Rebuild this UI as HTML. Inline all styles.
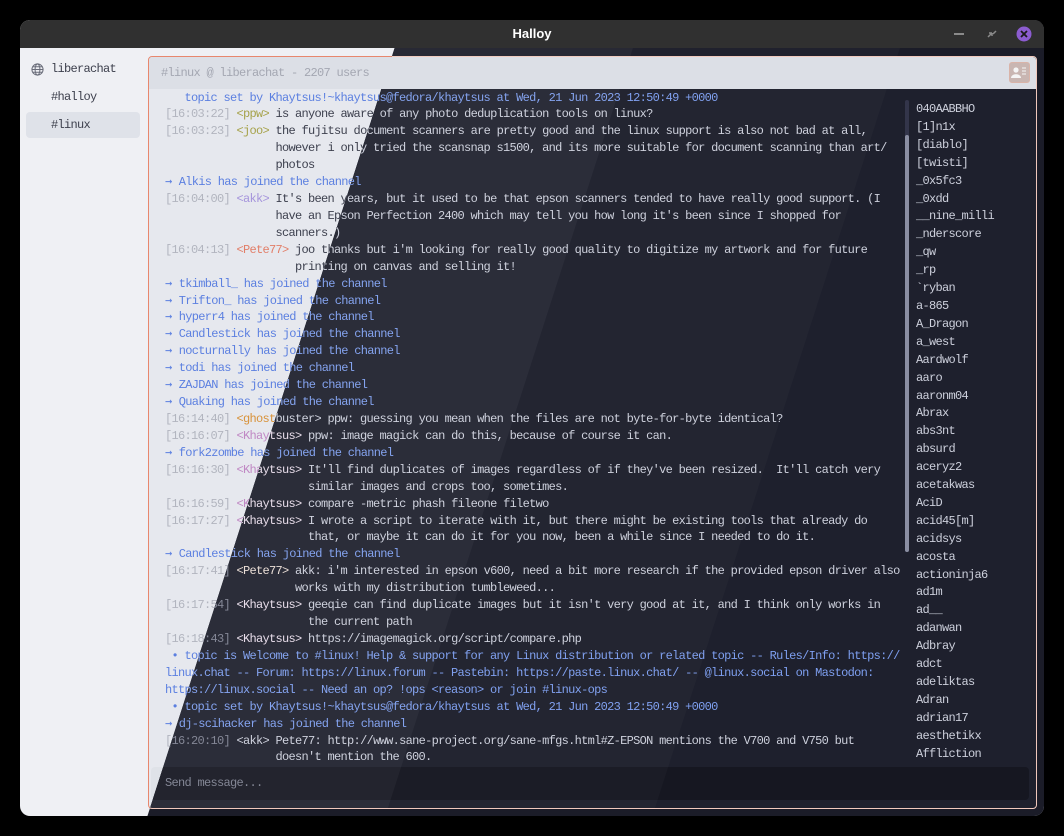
<!DOCTYPE html>
<html><head><meta charset="utf-8"><style>
*{margin:0;padding:0;box-sizing:border-box}
body{width:1064px;height:836px;background:#000;position:relative;overflow:hidden;font-family:"Liberation Sans",sans-serif}
.layer{position:absolute;left:0;top:0;width:1064px;height:836px}
.win{position:absolute;left:20px;top:20px;width:1024px;height:796px;border-radius:10px;overflow:hidden;background:var(--bg)}
.title{position:absolute;left:0;top:0;width:1024px;height:28px;background:#303030;color:#fff;font-weight:bold;font-size:13px;text-align:center;line-height:28px;z-index:5}
.mono{font-family:"Liberation Mono",monospace;font-size:12px;letter-spacing:-0.7px}
.side{position:absolute;left:0;top:28px;width:128px;height:768px;color:var(--stext)}
.pane{position:absolute;left:128px;top:36px;width:889px;height:753px;border:1px solid var(--border);border-radius:4px;background:var(--chat);overflow:hidden}
.hdr{position:absolute;left:0;top:0;width:100%;height:32px;background:var(--hdr);color:var(--htext);line-height:32px;padding-left:12px;z-index:2}
.msgs{position:absolute;left:16px;top:32px;width:740px;height:676px;overflow:hidden}
.msgs .in{position:absolute;left:0;top:0.5px;white-space:pre;line-height:16.92px;color:var(--text)}
.t{color:var(--ts)}.j{color:var(--join)}
.a{font-family:"DejaVu Sans Mono",monospace;letter-spacing:0;line-height:0}
.n1{color:var(--n1)}.n2{color:var(--n2)}.n3{color:var(--n3)}.n4{color:var(--n4)}.n5{color:var(--n5)}
.users{position:absolute;left:767px;top:44px;white-space:pre;line-height:17.9px;color:var(--text)}
.sb{position:absolute;left:756px;top:43px;width:4px;height:452px;border-radius:2px;background:var(--track)}
.sb i{position:absolute;left:0;top:35px;width:4px;height:417px;border-radius:2px;background:var(--thumb)}
.input{position:absolute;left:2px;top:710px;width:878px;height:33px;border-radius:4px;background:var(--inp);color:var(--ts);line-height:33px;padding-left:14px}
.ubtn{position:absolute;right:6px;top:5px;width:21px;height:21px;border:1px solid #d9b3a8;border-radius:3px;background:var(--btn)}
.light{--bg:#eff0f4;--stext:#3c3f4c;--border:#e8876d;--chat:#e6e8ee;--hdr:#dcdfe6;--htext:#a4a7b2;--text:#3d404e;--ts:#b2b5bf;--join:#5b7fe0;--track:#cdd0d8;--thumb:#a2a6b3;--inp:#dfe2e8;--btn:#c9b6b2;--n1:#a6a24a;--n2:#a594dc;--n3:#e27e68;--n4:#d8923a;--n5:#c088c4}
.dark{--bg:#1b1c28;--stext:#c6c9d6;--border:#f0c8bc;--chat:#1e202d;--hdr:#191a25;--htext:#6a6d7c;--text:#cdd0dc;--ts:#7d8090;--join:#7e9ff0;--track:#33354a;--thumb:#8a8ea2;--inp:#161721;--btn:#a89490;--n1:#cdd0dc;--n2:#cdd0dc;--n3:#eaddd5;--n4:#cdd0dc;--n5:#e8dcea;clip-path:polygon(410px 0,1064px 0,1064px 836px,141px 836px)}
.band{position:absolute;left:0;top:0;width:1064px;height:836px;pointer-events:none;z-index:4}
</style></head><body>

<div class="layer light">
<div class="win">
 <div class="title">Halloy</div>
 <div class="side mono">
  <svg style="position:absolute;left:11px;top:15px" width="13" height="13" viewBox="0 0 14 14" fill="none" stroke="#6a6d7a" stroke-width="1.1"><circle cx="7" cy="7" r="6"/><ellipse cx="7" cy="7" rx="2.6" ry="6"/><path d="M1 7h12M2 4h10M2 10h10"/></svg>
  <div style="position:absolute;left:31px;top:14px">liberachat</div>
  <div style="position:absolute;left:31px;top:42px">#halloy</div>
  <div style="position:absolute;left:6px;top:64px;width:114px;height:26px;background:#dfe2e9;border-radius:4px"></div>
  <div style="position:absolute;left:31px;top:70px">#linux</div>
 </div>
 <div class="pane mono">
  <div class="hdr">#linux @ liberachat - 2207 users<div class="ubtn"></div></div>
  <div class="msgs"><div class="in"><span class="j">   topic set by Khaytsus!~khaytsus@fedora/khaytsus at Wed, 21 Jun 2023 12:50:49 +0000</span>
<span class="t">[16:03:22]</span> <span class="n1">&lt;ppw&gt;</span> is anyone aware of any photo deduplication tools on linux?
<span class="t">[16:03:23]</span> <span class="n1">&lt;joo&gt;</span> the fujitsu document scanners are pretty good and the linux support is also not bad at all,
                 however i only tried the scansnap s1500, and its more suitable for document scanning than art/
                 photos
<span class="j"><span class="a">→</span> Alkis has joined the channel</span>
<span class="t">[16:04:00]</span> <span class="n2">&lt;akk&gt;</span> It's been years, but it used to be that epson scanners tended to have really good support. (I
                 have an Epson Perfection 2400 which may tell you how long it's been since I shopped for
                 scanners.)
<span class="t">[16:04:13]</span> <span class="n3">&lt;Pete77&gt;</span> joo thanks but i'm looking for really good quality to digitize my artwork and for future
                    printing on canvas and selling it!
<span class="j"><span class="a">→</span> tkimball_ has joined the channel
<span class="a">→</span> Trifton_ has joined the channel
<span class="a">→</span> hyperr4 has joined the channel
<span class="a">→</span> Candlestick has joined the channel
<span class="a">→</span> nocturnally has joined the channel
<span class="a">→</span> todi has joined the channel
<span class="a">→</span> ZAJDAN has joined the channel
<span class="a">→</span> Quaking has joined the channel</span>
<span class="t">[16:14:40]</span> <span class="n4">&lt;ghostbuster&gt;</span> ppw: guessing you mean when the files are not byte-for-byte identical?
<span class="t">[16:16:07]</span> <span class="n5">&lt;Khaytsus&gt;</span> ppw: image magick can do this, because of course it can.
<span class="j"><span class="a">→</span> fork2zombe has joined the channel</span>
<span class="t">[16:16:30]</span> <span class="n5">&lt;Khaytsus&gt;</span> It'll find duplicates of images regardless of if they've been resized.  It'll catch very
                      similar images and crops too, sometimes.
<span class="t">[16:16:59]</span> <span class="n5">&lt;Khaytsus&gt;</span> compare -metric phash fileone filetwo
<span class="t">[16:17:27]</span> <span class="n5">&lt;Khaytsus&gt;</span> I wrote a script to iterate with it, but there might be existing tools that already do
                      that, or maybe it can do it for you now, been a while since I needed to do it.
<span class="j"><span class="a">→</span> Candlestick has joined the channel</span>
<span class="t">[16:17:41]</span> <span class="n3">&lt;Pete77&gt;</span> akk: i'm interested in epson v600, need a bit more research if the provided epson driver also
                    works with my distribution tumbleweed...
<span class="t">[16:17:54]</span> <span class="n5">&lt;Khaytsus&gt;</span> geeqie can find duplicate images but it isn't very good at it, and I think only works in
                      the current path
<span class="t">[16:18:43]</span> <span class="n5">&lt;Khaytsus&gt;</span> https://imagemagick.org/script/compare.php
<span class="j"> • topic is Welcome to #linux! Help &amp; support for any Linux distribution or related topic -- Rules/Info: https://
linux.chat -- Forum: https://linux.forum -- Pastebin: https://paste.linux.chat/ -- @linux.social on Mastodon:
https://linux.social -- Need an op? !ops &lt;reason&gt; or join #linux-ops
 • topic set by Khaytsus!~khaytsus@fedora/khaytsus at Wed, 21 Jun 2023 12:50:49 +0000
<span class="a">→</span> dj-scihacker has joined the channel</span>
<span class="t">[16:20:10]</span> <span class="n2">&lt;akk&gt;</span> Pete77: http://www.sane-project.org/sane-mfgs.html#Z-EPSON mentions the V700 and V750 but
                 doesn't mention the 600.</div></div>
  <div class="sb"><i></i></div>
  <div class="users">040AABBHO
[1]n1x
[diablo]
[twisti]
_0x5fc3
_0xdd
__nine_milli
_nderscore
_qw
_rp
`ryban
a-865
A_Dragon
a_west
Aardwolf
aaro
aaronm04
Abrax
abs3nt
absurd
aceryz2
acetakwas
AciD
acid45[m]
acidsys
acosta
actioninja6
ad1m
ad__
adanwan
Adbray
adct
adeliktas
Adran
adrian17
aesthetikx
Affliction</div>
  <div class="input">Send message...</div>
 </div>
</div>
</div>

<div class="layer dark">
<div class="win">
 <div class="title">Halloy</div>
 <div class="pane mono">
  <div class="hdr">#linux @ liberachat - 2207 users<div class="ubtn"></div></div>
  <div class="msgs"><div class="in"><span class="j">   topic set by Khaytsus!~khaytsus@fedora/khaytsus at Wed, 21 Jun 2023 12:50:49 +0000</span>
<span class="t">[16:03:22]</span> <span class="n1">&lt;ppw&gt;</span> is anyone aware of any photo deduplication tools on linux?
<span class="t">[16:03:23]</span> <span class="n1">&lt;joo&gt;</span> the fujitsu document scanners are pretty good and the linux support is also not bad at all,
                 however i only tried the scansnap s1500, and its more suitable for document scanning than art/
                 photos
<span class="j"><span class="a">→</span> Alkis has joined the channel</span>
<span class="t">[16:04:00]</span> <span class="n2">&lt;akk&gt;</span> It's been years, but it used to be that epson scanners tended to have really good support. (I
                 have an Epson Perfection 2400 which may tell you how long it's been since I shopped for
                 scanners.)
<span class="t">[16:04:13]</span> <span class="n3">&lt;Pete77&gt;</span> joo thanks but i'm looking for really good quality to digitize my artwork and for future
                    printing on canvas and selling it!
<span class="j"><span class="a">→</span> tkimball_ has joined the channel
<span class="a">→</span> Trifton_ has joined the channel
<span class="a">→</span> hyperr4 has joined the channel
<span class="a">→</span> Candlestick has joined the channel
<span class="a">→</span> nocturnally has joined the channel
<span class="a">→</span> todi has joined the channel
<span class="a">→</span> ZAJDAN has joined the channel
<span class="a">→</span> Quaking has joined the channel</span>
<span class="t">[16:14:40]</span> <span class="n4">&lt;ghostbuster&gt;</span> ppw: guessing you mean when the files are not byte-for-byte identical?
<span class="t">[16:16:07]</span> <span class="n5">&lt;Khaytsus&gt;</span> ppw: image magick can do this, because of course it can.
<span class="j"><span class="a">→</span> fork2zombe has joined the channel</span>
<span class="t">[16:16:30]</span> <span class="n5">&lt;Khaytsus&gt;</span> It'll find duplicates of images regardless of if they've been resized.  It'll catch very
                      similar images and crops too, sometimes.
<span class="t">[16:16:59]</span> <span class="n5">&lt;Khaytsus&gt;</span> compare -metric phash fileone filetwo
<span class="t">[16:17:27]</span> <span class="n5">&lt;Khaytsus&gt;</span> I wrote a script to iterate with it, but there might be existing tools that already do
                      that, or maybe it can do it for you now, been a while since I needed to do it.
<span class="j"><span class="a">→</span> Candlestick has joined the channel</span>
<span class="t">[16:17:41]</span> <span class="n3">&lt;Pete77&gt;</span> akk: i'm interested in epson v600, need a bit more research if the provided epson driver also
                    works with my distribution tumbleweed...
<span class="t">[16:17:54]</span> <span class="n5">&lt;Khaytsus&gt;</span> geeqie can find duplicate images but it isn't very good at it, and I think only works in
                      the current path
<span class="t">[16:18:43]</span> <span class="n5">&lt;Khaytsus&gt;</span> https://imagemagick.org/script/compare.php
<span class="j"> • topic is Welcome to #linux! Help &amp; support for any Linux distribution or related topic -- Rules/Info: https://
linux.chat -- Forum: https://linux.forum -- Pastebin: https://paste.linux.chat/ -- @linux.social on Mastodon:
https://linux.social -- Need an op? !ops &lt;reason&gt; or join #linux-ops
 • topic set by Khaytsus!~khaytsus@fedora/khaytsus at Wed, 21 Jun 2023 12:50:49 +0000
<span class="a">→</span> dj-scihacker has joined the channel</span>
<span class="t">[16:20:10]</span> <span class="n2">&lt;akk&gt;</span> Pete77: http://www.sane-project.org/sane-mfgs.html#Z-EPSON mentions the V700 and V750 but
                 doesn't mention the 600.</div></div>
  <div class="sb"><i></i></div>
  <div class="users">040AABBHO
[1]n1x
[diablo]
[twisti]
_0x5fc3
_0xdd
__nine_milli
_nderscore
_qw
_rp
`ryban
a-865
A_Dragon
a_west
Aardwolf
aaro
aaronm04
Abrax
abs3nt
absurd
aceryz2
acetakwas
AciD
acid45[m]
acidsys
acosta
actioninja6
ad1m
ad__
adanwan
Adbray
adct
adeliktas
Adran
adrian17
aesthetikx
Affliction</div>
  <div class="input">Send message...</div>
 </div>
</div>
<div class="band" style="background:rgba(255,255,255,0.06);clip-path:polygon(395px 48px,633px 48px,388px 808px,150px 808px)"></div>
<div class="band" style="background:rgba(255,255,255,0.025);clip-path:polygon(633px 48px,900px 48px,655px 808px,388px 808px)"></div>
</div>

<svg style="position:absolute;left:0;top:0;z-index:10" width="1064" height="100">
 <rect x="954" y="33" width="10" height="2" fill="#8a8a8a"/>
 <path d="M988 37l4-4M992 33h-3M992 33v3M996 31l-3 3" stroke="#8a8a8a" stroke-width="1.5" fill="none"/>
 <circle cx="1024" cy="34" r="7.5" fill="#8c5cd0"/>
 <path d="M1021 31l6 6M1027 31l-6 6" stroke="#1a1a1a" stroke-width="1.8"/>
 <circle cx="1016" cy="70" r="2.6" fill="#f5f5f5"/>
 <path d="M1011 78c0-5 10-5 10 0z" fill="#f5f5f5"/>
 <path d="M1022 68h4M1022 71h4M1022 74h4" stroke="#f5f5f5" stroke-width="1"/>
</svg>
</body></html>
